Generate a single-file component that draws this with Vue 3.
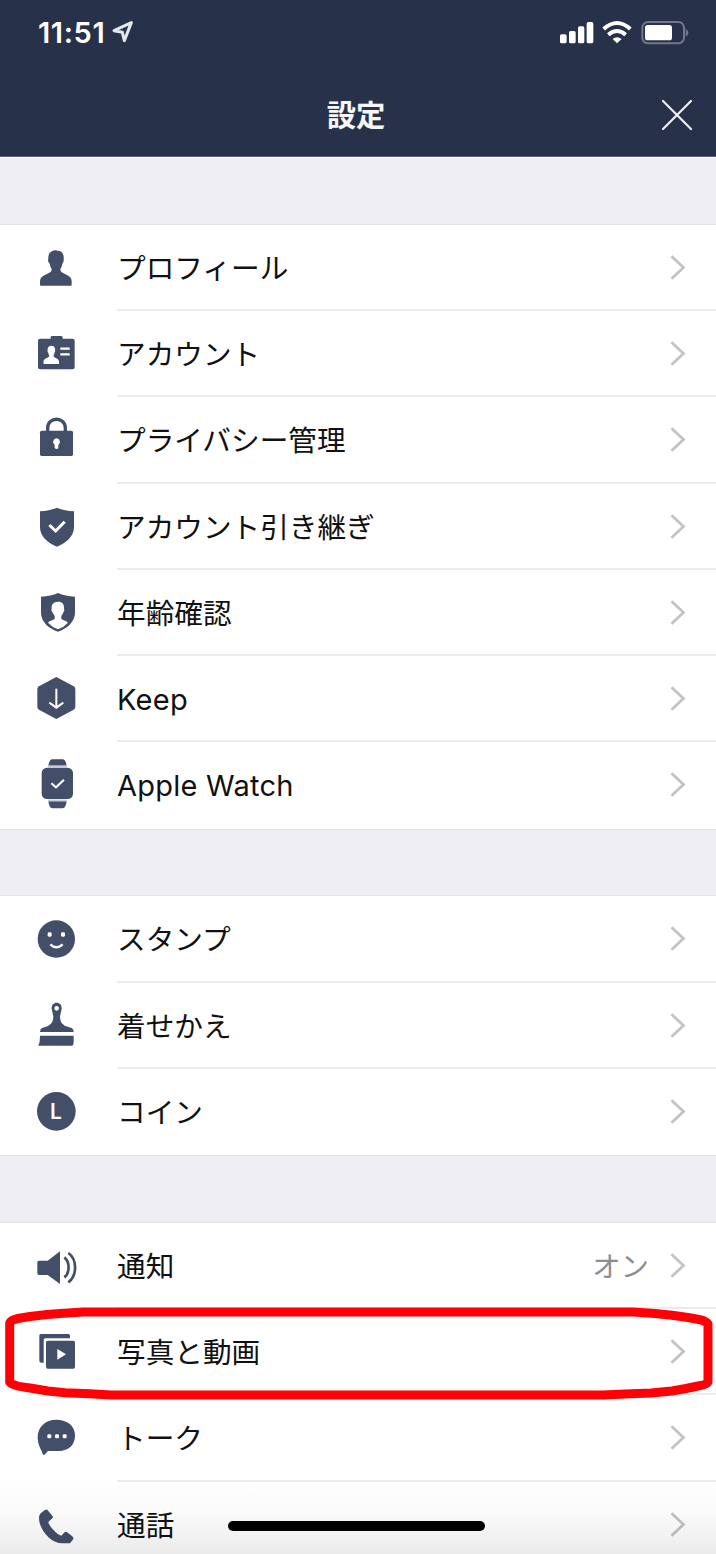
<script setup>
const person = 'M90 37C75 37 66 47 67 61L66 67Q67 74 71 77Q73 88 77 93L76 99C70 109 42 110 42 130V140Q42 143 45 143H134Q137 143 137 140V130C137 110 110 109 104 99L103 93Q108 86 109 77Q114 72 113 65C115 47 107 38 95 38Z'

const groups = [
  [
    { icon: 'profile', label: 'プロフィール' },
    { icon: 'account', label: 'アカウント' },
    { icon: 'lock', label: 'プライバシー管理' },
    { icon: 'transfer', label: 'アカウント引き継ぎ' },
    { icon: 'age', label: '年齢確認' },
    { icon: 'keep', label: 'Keep', latin: true },
    { icon: 'watch', label: 'Apple Watch', latin: true },
  ],
  [
    { icon: 'sticker', label: 'スタンプ' },
    { icon: 'theme', label: '着せかえ' },
    { icon: 'coin', label: 'コイン' },
  ],
  [
    { icon: 'sound', label: '通知', value: 'オン' },
    { icon: 'media', label: '写真と動画', marked: true },
    { icon: 'talk', label: 'トーク' },
    { icon: 'call', label: '通話' },
  ],
]
</script>

<template>
  <div class="screen">
    <header class="header">
      <div class="status">
        <span class="time">11:51</span>
        <svg class="location" viewBox="0 0 66 66"><path d="M6 29L58 5L37 59L31 34Z" /></svg>
        <svg class="signals" viewBox="0 0 396 84">
          <g fill="#fff">
            <rect x="3" y="52" width="20" height="27" rx="5" />
            <rect x="30" y="42" width="20" height="37" rx="5" />
            <rect x="57" y="28" width="19" height="51" rx="5" />
            <rect x="83" y="15" width="20" height="64" rx="5" />
            <path d="M161 66Q174 56 188 66L174 79Z" />
          </g>
          <g fill="none" stroke="#fff" stroke-width="12">
            <path d="M134 36Q174 0 214 36" />
            <path d="M148 53Q174 31 200 53" />
          </g>
          <rect x="250" y="15" width="125" height="64" rx="17" fill="none" stroke="#717889" stroke-width="6" />
          <path d="M380 35Q396 47 380 59Z" fill="#717889" />
          <rect x="258" y="24" width="81" height="46" rx="8" fill="#fff" />
        </svg>
      </div>
      <div class="nav">
        <h1>設定</h1>
        <svg class="close" viewBox="0 0 32 32"><path d="M2 2L30 30M30 2L2 30" /></svg>
      </div>
    </header>

    <main>
      <section v-for="(group, g) in groups" :key="g" class="group">
        <div v-for="row in group" :key="row.icon" class="row">
          <svg class="icon" viewBox="0 0 180 180">
            <path v-if="row.icon === 'profile'" :d="person" />
            <g v-else-if="row.icon === 'account'">
              <path d="M42 44H74V40Q74 36 79 36H105Q110 36 110 40V44H140Q146 44 146 50V130Q146 136 140 136H42Q36 136 36 130V50Q36 44 42 44Z" />
              <path class="cut" :d="person" transform="translate(32 46) scale(.49 .52)" />
              <path class="line" stroke-width="7" d="M103 74H131M103 91H131" />
            </g>
            <g v-else-if="row.icon === 'lock'">
              <rect x="42" y="62" width="99" height="76" rx="5" />
              <path class="ink" stroke-width="10" d="M65 66V54C65 19 118 19 118 54V66" />
              <path class="cut" d="M92 85A11 11 0 0 0 86 105V114Q92 120 97 114V105A11 11 0 0 0 92 85Z" />
            </g>
            <g v-else-if="row.icon === 'transfer'">
              <path d="M42 43Q72 42 93 32Q114 42 144 43V91C144 119 119 139 93 149C67 139 42 119 42 91Z" />
              <path class="line" stroke-width="9" d="M70 84L89 102L116 74" />
            </g>
            <g v-else-if="row.icon === 'age'">
              <path d="M45 41Q75 40 96 30Q117 40 147 41V89C147 117 122 137 96 146C70 137 45 117 45 89Z" />
              <path class="cut" d="M96 56C82 56 76 65 77 76L76 82L81 91L86 99V107C82 112 72 111 66 119Q79 133 96 139Q113 133 126 119C120 111 109 112 106 107V99L111 91L115 82L114 76C115 64 109 56 96 56Z" />
            </g>
            <g v-else-if="row.icon === 'keep'">
              <path d="M91 24L143 52Q148 55 148 60V114Q148 119 143 122L91 150L39 122Q34 119 34 114V60Q34 55 39 52Z" />
              <path class="line" stroke-width="6" d="M91 59V116M70 101L91 116L112 101" />
            </g>
            <g v-else-if="row.icon === 'watch'">
              <path d="M67 32Q70 13 79 13H110Q119 13 122 32ZM67 139H122Q119 160 110 160H79Q70 160 67 139Z" />
              <path stroke="#c8ccd5" stroke-width="5" d="M66 34H122M66 136H122" />
              <rect x="47" y="38" width="94" height="94" rx="16" />
              <path class="line" stroke-width="6" d="M76 85L90 97L114 74" />
            </g>
            <g v-else-if="row.icon === 'sticker'">
              <circle cx="91" cy="90" r="56" />
              <rect class="cut" x="65" y="70" width="12" height="13" rx="4" />
              <rect class="cut" x="105" y="70" width="12" height="13" rx="4" />
              <path class="line" stroke-width="7" d="M73 106Q91 124 110 106" />
            </g>
            <g v-else-if="row.icon === 'theme'">
              <path fill-rule="evenodd" d="M92 20C82 20 76 28 77 39L82 61C82 78 76 84 66 90L48 96Q42 99 42 108H143Q143 99 137 96L118 90C108 84 102 78 102 61L107 39C108 28 102 20 92 20ZM92 30A7 7 0 1 1 92 44A7 7 0 1 1 92 30Z" />
              <path d="M42 119H143V137Q143 149 137 149H37L41 137Z" />
            </g>
            <g v-else-if="row.icon === 'coin'">
              <circle cx="91" cy="88" r="58" />
              <text class="coin-letter" x="72" y="111">L</text>
            </g>
            <g v-else-if="row.icon === 'sound'">
              <path d="M39 74H65L102 46V144L65 117H39Q34 117 34 112V79Q34 74 39 74Z" />
              <path class="ink" stroke-width="8" d="M115 64C132 77 132 111 115 124M127 51C154 70 154 119 127 139" />
            </g>
            <g v-else-if="row.icon === 'media'">
              <path d="M44 36H127Q132 36 132 41V49H58Q53 49 53 54V122H46Q40 122 40 116V41Q40 36 44 36Z" />
              <rect x="60" y="56" width="87" height="84" rx="5" />
              <path class="cut" d="M94 81L120 97L94 113Z" />
            </g>
            <g v-else-if="row.icon === 'talk'">
              <path d="M91 35C58 35 35 57 35 87C35 109 44 122 47 130L50 138Q53 143 57 139L66 129H98C129 129 147 111 147 82C147 54 124 35 91 35Z" />
              <rect class="cut" x="64" y="79" width="12" height="12" rx="4" />
              <rect class="cut" x="87" y="79" width="12" height="12" rx="4" />
              <rect class="cut" x="110" y="79" width="12" height="12" rx="4" />
            </g>
            <path v-else d="M60 44Q55 44 50 50C42 55 39 60 39 68C39 105 75 145 108 145H132L142 132Q143 128 138 123L122 111Q119 109 116 112L106 122Q96 120 79 101Q66 86 67 81L79 70Q82 67 79 62L65 46Q63 43 60 44Z" />
          </svg>
          <div class="body">
            <span class="label" :class="{ latin: row.latin }">{{ row.label }}</span>
            <span v-if="row.value" class="value">{{ row.value }}</span>
            <svg class="chevron" viewBox="0 0 16 26"><path d="M1.500 1.700L13.500 13L1.500 24.300" /></svg>
          </div>
          <svg v-if="row.marked" class="marker" viewBox="0 1300 716 110">
            <path d="M9.700 1322Q11 1319 18 1317.500L30 1315.500L47 1313.500L60 1312.500L83 1311H633L655 1312.500L672 1314.300L688 1316.500L699 1318.500Q706 1320 708 1323V1381Q706 1384 698 1385L686 1387.500L672 1390L651 1392L625 1393L603 1394H111L90 1392.700L65 1391.700L48 1390L30 1387Q12 1385 9.700 1381Z" />
          </svg>
        </div>
      </section>
    </main>
    <div class="fade"><div class="home"></div></div>
  </div>
</template>

<style>
body { margin: 0; overflow: hidden; }
</style>

<style scoped>
.screen {
  position: relative;
  width: 716px;
  height: 1554px;
  overflow: hidden;
  background: #eeeef3;
  font-family: "Noto Sans CJK JP", sans-serif;
  color: #111;
}
.header {
  height: 157px;
  box-sizing: border-box;
  background: #273149;
  border-bottom: 1px solid #596074;
  box-shadow: 0 1px 0 #fff;
  color: #fff;
}
.status {
  display: flex;
  align-items: flex-start;
  height: 72px;
  padding: 18px 25px 0 38px;
  box-sizing: border-box;
}
.time {
  width: 74px;
  font: 600 29px/29px Inter, sans-serif;
  letter-spacing: 0.600px;
}
.location { width: 22px; height: 22px; margin-top: 3px; }
.location path { fill: none; stroke: #e5e7ec; stroke-width: 9; stroke-linejoin: round; }
.signals { width: 132px; height: 28px; margin: -1px 0 0 auto; }
.nav {
  display: grid;
  grid-template-columns: 60px 1fr 60px;
  align-items: center;
  height: 84px;
}
h1 {
  grid-column: 2;
  margin: 0;
  text-align: center;
  font-size: 29.300px;
  line-height: 44px;
  font-weight: 600;
  color: #f6f7f9;
  transform: translate(-2px, -1px);
}
.close { width: 32px; height: 32px; margin: 1px 0 0 5px; }
.close path { fill: none; stroke: #f0f1f4; stroke-width: 2.200; stroke-linecap: round; }
.group {
  margin-top: 67.750px;
  background: #fff;
  box-shadow: 0 -1px 0 #e2e2e7, 0 1px 0 #e2e2e7;
}
.row { position: relative; display: flex; height: 86.250px; align-items: center; }
.icon { width: 60px; height: 60px; margin: 0 31px 0 26px; flex: none; fill: #434e69; }
.cut { fill: #fff; }
.line { fill: none; stroke: #fff; }
.ink { fill: none; stroke: #434e69; }
.coin-letter { fill: #fff; font: 600 63px Inter, sans-serif; }
.body {
  flex: 1;
  align-self: stretch;
  display: flex;
  align-items: center;
  padding-right: 30px;
  border-bottom: 2px solid #ececef;
}
.row:last-child .body { border-bottom-color: transparent; }
.label { flex: 1; font-size: 28.650px; line-height: 40px; white-space: nowrap; }
.latin { font-family: Inter, sans-serif; font-size: 29px; letter-spacing: 0.250px; position: relative; top: 2px; }
.value { margin-right: 21px; font-size: 28.400px; line-height: 40px; color: #8d8d91; }
.chevron { width: 16px; height: 26px; transform: translateY(0.500px); }
.chevron path { fill: none; stroke: #c3c3c6; stroke-width: 2.800; }
.marker { position: absolute; z-index: 2; left: 0; top: -8.300px; width: 716px; height: 110px; }
.marker path { fill: none; stroke: #ff0006; stroke-width: 9; stroke-linejoin: round; }
.fade {
  position: absolute;
  inset: auto 0 0;
  height: 78px;
  background: linear-gradient(rgba(0, 0, 0, 0), rgba(0, 0, 0, .025) 50%, rgba(0, 0, 0, .08));
}
.home { width: 257px; height: 10px; margin: 45px auto 0 228px; border-radius: 5px; background: #000; }
</style>
